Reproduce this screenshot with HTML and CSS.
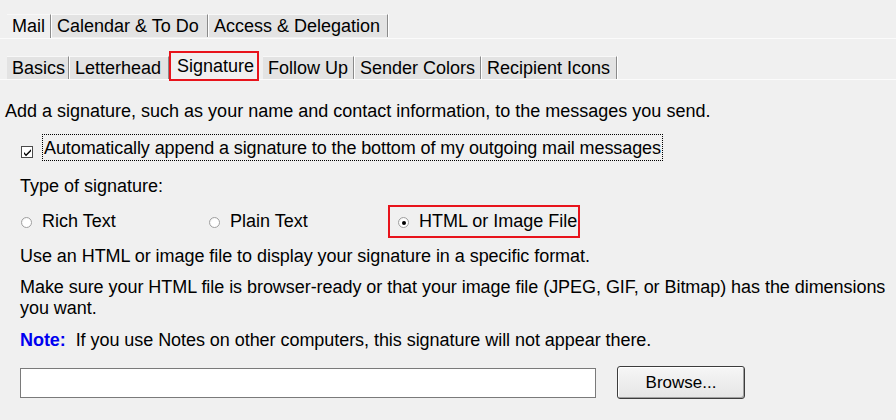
FILE: index.html
```html
<!DOCTYPE html>
<html>
<head>
<meta charset="utf-8">
<link rel="stylesheet" href="styles.css">
</head>
<body>
<div class="page">
  <div class="tabs tabs-top">
    <div class="tab sel">Mail</div>
    <div class="tab">Calendar &amp; To Do</div>
    <div class="tab">Access &amp; Delegation</div>
  </div>
  <div class="tabs tabs-sub">
    <div class="tab">Basics</div>
    <div class="tab">Letterhead</div>
    <div class="tab sel hl">Signature</div>
    <div class="tab">Follow Up</div>
    <div class="tab">Sender Colors</div>
    <div class="tab">Recipient Icons</div>
  </div>
  <p class="intro">Add a signature, such as your name and contact information, to the messages you send.</p>
  <div class="check-row">
    <span class="checkbox"><svg width="9" height="9" viewBox="0 0 9 9"><path d="M1 4 L3 6.2 L8 1.2 L8 3.2 L3 8.2 L1 6 Z" fill="#000"/></svg></span>
    <span class="focus">Automatically append a signature to the bottom of my outgoing mail messages</span>
  </div>
  <div class="section">
    <div class="label">Type of signature:</div>
    <div class="radios">
      <div class="radio-item r1"><span class="radio"></span>Rich Text</div>
      <div class="radio-item r2"><span class="radio"></span>Plain Text</div>
      <div class="radio-item r3"><span class="radio on"></span>HTML or Image File</div>
    </div>
    <p class="line l1">Use an HTML or image file to display your signature in a specific format.</p>
    <p class="line l2">Make sure your HTML file is browser-ready or that your image file (JPEG, GIF, or Bitmap) has the dimensions you want.</p>
    <p class="line l3"><span class="note">Note:</span>&nbsp; If you use Notes on other computers, this signature will not appear there.</p>
    <div class="file-row">
      <div class="input"></div>
      <div class="button">Browse...</div>
    </div>
  </div>
</div>
</body>
</html>
```

FILE: styles.css
```css
html, body {
  margin: 0;
  padding: 0;
  background: #f0f0f0;
}
body {
  font-family: "Liberation Sans", Arial, sans-serif;
  font-size: 18px;
  color: #000;
  width: 896px;
  height: 420px;
  overflow: hidden;
}
.page {
  padding: 14px 0 0 7px;
}
.tabs {
  display: flex;
  margin-left: -7px;
  padding-left: 7px;
  height: 24px;
  border-bottom: 1px solid #fbfbfb;
}
.tabs-top {
  align-items: flex-start;
}
.tabs-sub {
  margin-top: 16px;
  align-items: flex-end;
}
.tab {
  height: 23px;
  line-height: 23px;
  padding: 0 0 0 5px;
  background: #e3e3e3;
  border-top: 1px solid #f8f8f8;
  border-right: 1px solid #8a8a8a;
  box-shadow: 1px 0 0 #fff;
  margin-right: 1px;
  white-space: nowrap;
  box-sizing: border-box;
}
.tabs-top .tab.sel {
  background: #f0f0f0;
  height: 24px;
}
.tabs-top .tab:nth-child(1) { width: 44px; }
.tabs-top .tab:nth-child(2) { width: 156px; }
.tabs-top .tab:nth-child(3) { width: 179px; }
.tabs-sub .tab:nth-child(1) { width: 62px; }
.tabs-sub .tab:nth-child(2) { width: 99px; }
.tabs-sub .tab:nth-child(4) { width: 91px; }
.tabs-sub .tab:nth-child(5) { width: 126px; }
.tabs-sub .tab:nth-child(6) { width: 135px; }
.tabs-sub .tab.hl {
  width: 86px;
  height: 26px;
  line-height: 27px;
  padding-left: 6px;
  background: #f0f0f0;
  border-right: none;
  border-top: none;
  box-shadow: none;
  outline: 2px solid #e8131b;
  margin-left: 1px;
  margin-right: 6px;
}
.intro {
  margin: 21px 0 0 -2px;
  line-height: 21px;
}
.check-row {
  display: flex;
  align-items: flex-start;
  margin: 12px 0 0 14px;
}
.checkbox {
  width: 10px;
  height: 10px;
  margin-top: 12px;
  border: 1px solid #4a4a4a;
  background: #fff;
  display: inline-flex;
  align-items: center;
  justify-content: center;
  margin-right: 9px;
}
.focus {
  border: 1px dotted #000;
  padding: 3px 1px 1px 1px;
  line-height: 21px;
  letter-spacing: -0.1px;
}
.section {
  padding-left: 13px;
}
.label {
  margin-top: 15px;
  line-height: 20px;
}
.radios {
  display: flex;
  margin-top: 9px;
  height: 33px;
  align-items: center;
}
.radio-item {
  display: flex;
  align-items: center;
  line-height: 21px;
  height: 33px;
  box-sizing: border-box;
}
.r1 { width: 187px; padding-left: 1px; }
.r2 { width: 181px; padding-left: 2px; }
.r3 {
  border: 2px solid #e8131b;
  padding-left: 8px;
  width: 192px;
}
.radio {
  width: 9px;
  height: 9px;
  margin-top: 2px;
  border-radius: 50%;
  border: 1px solid #a0a0a0;
  background: radial-gradient(circle at 60% 60%, #fff 50%, #e6e6e6 100%);
  margin-right: 10px;
  display: inline-flex;
  align-items: center;
  justify-content: center;
  flex: none;
}
.radio.on::after {
  content: "";
  width: 4px;
  height: 4px;
  border-radius: 50%;
  background: #000;
}
.line {
  margin: 0;
  line-height: 21px;
  width: 872px;
  letter-spacing: -0.05px;
}
.l1 { margin-top: 8px; }
.l2 { margin-top: 10px; }
.l3 { margin-top: 11px; }
.note {
  color: #0000f0;
  font-weight: bold;
}
.file-row {
  display: flex;
  align-items: center;
  margin-top: 15px;
  height: 33px;
}
.input {
  width: 574px;
  height: 28px;
  background: #fff;
  border: 1px solid #7a7a7a;
}
.button {
  margin-left: 21px;
  width: 128px;
  height: 33px;
  box-sizing: border-box;
  border: 1px solid #3c3c3c;
  border-radius: 3px;
  background: linear-gradient(#f6f6f6, #e5e5e5);
  box-shadow: inset 1px 1px 0 #fff, inset -1px -1px 0 #a0a0a0;
  display: flex;
  align-items: center;
  justify-content: center;
  font-size: 17px;
}
```
